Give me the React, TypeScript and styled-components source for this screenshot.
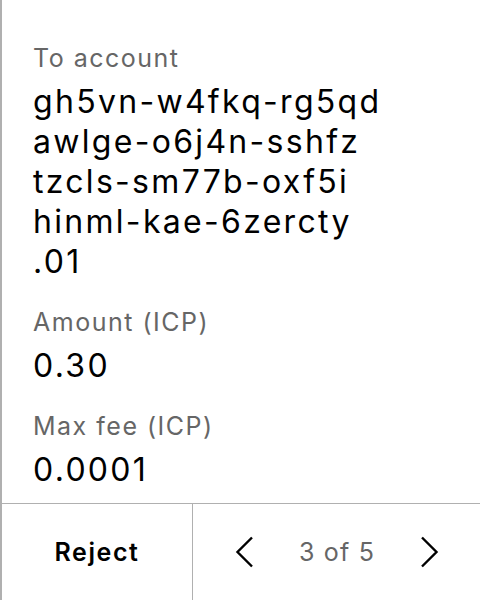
import React from "react";
import styled, { createGlobalStyle } from "styled-components";

const Global = createGlobalStyle`
  html, body { margin: 0; padding: 0; background: #fff; }
  body { font-family: Inter, "Noto Sans", sans-serif; -webkit-font-smoothing: antialiased; }
`;

const Screen = styled.div`
  width: 480px;
  height: 600px;
  box-sizing: border-box;
  border-left: 2px solid #b0b0b0;
  display: flex;
  flex-direction: column;
  background: #fff;
`;

const Content = styled.div`
  flex: 1;
  padding: 42px 0 0 31px;
  display: flex;
  flex-direction: column;
  gap: 24px;
`;

const Field = styled.div`
  display: flex;
  flex-direction: column;
  gap: 8px;
`;

const Label = styled.div`
  font-size: 25px;
  line-height: 32px;
  letter-spacing: 1.5px;
  color: #666;
`;

const Value = styled.div`
  font-size: 32px;
  line-height: 40px;
  letter-spacing: 2.3px;
  color: #000;
  white-space: pre-line;
`;

const Footer = styled.div`
  height: 96px;
  border-top: 1px solid #b0b0b0;
  display: grid;
  grid-template-columns: 191px 1fr;
`;

const RejectButton = styled.button`
  border: none;
  background: none;
  font-family: inherit;
  font-weight: 600;
  font-size: 25px;
  letter-spacing: 1.6px;
  color: #000;
  border-right: 1px solid #b0b0b0;
  padding: 0;
`;

const Pager = styled.div`
  display: flex;
  align-items: center;
  justify-content: space-between;
  padding: 0 41px 0 42px;
`;

const PageText = styled.span`
  font-size: 25px;
  letter-spacing: 1.2px;
  color: #666;
`;

const Chevron = ({ dir }: { dir: "left" | "right" }) => (
  <svg width="19" height="32" viewBox="0 0 19 32">
    <path
      d={dir === "left" ? "M17 1.5 L2.5 16 L17 30.5" : "M2 1.5 L16.5 16 L2 30.5"}
      fill="none"
      stroke="#000"
      strokeWidth="2.4"
    />
  </svg>
);

export default function App() {
  return (
    <>
      <Global />
      <Screen>
        <Content>
          <Field>
            <Label>To account</Label>
            <Value>{"gh5vn-w4fkq-rg5qd\nawlge-o6j4n-sshfz\ntzcls-sm77b-oxf5i\nhinml-kae-6zercty\n.01"}</Value>
          </Field>
          <Field>
            <Label>Amount (ICP)</Label>
            <Value>0.30</Value>
          </Field>
          <Field>
            <Label>Max fee (ICP)</Label>
            <Value>0.0001</Value>
          </Field>
        </Content>
        <Footer>
          <RejectButton>Reject</RejectButton>
          <Pager>
            <Chevron dir="left" />
            <PageText>3 of 5</PageText>
            <Chevron dir="right" />
          </Pager>
        </Footer>
      </Screen>
    </>
  );
}
